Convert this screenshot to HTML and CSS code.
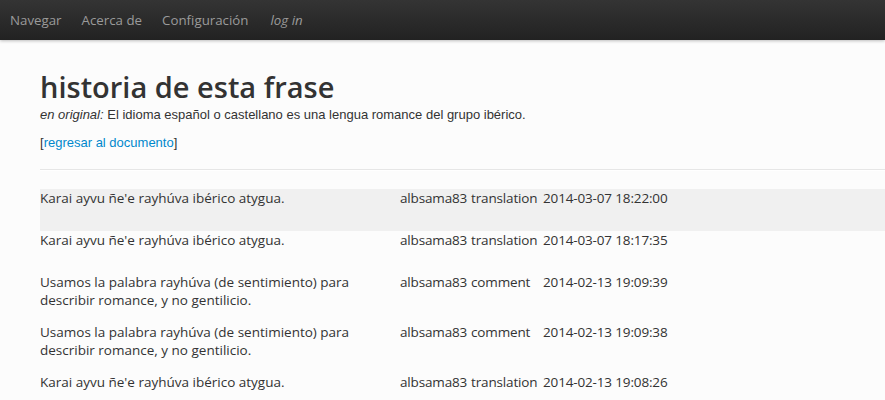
FILE: index.html
```html
<!DOCTYPE html>
<html lang="es">
<head>
<meta charset="utf-8">
<title>historia de esta frase</title>
<link rel="stylesheet" href="styles.css">
</head>
<body>
<nav class="navbar">
  <a class="nav-link" href="#">Navegar</a>
  <a class="nav-link" href="#">Acerca de</a>
  <a class="nav-link" href="#">Configuración</a>
  <a class="nav-link login" href="#">log in</a>
</nav>
<main class="content">
  <h1 class="title">historia de esta frase</h1>
  <p class="original"><em>en original:</em> El idioma español o castellano es una lengua romance del grupo ibérico.</p>
  <p class="back">[<a href="#">regresar al documento</a>]</p>
  <hr class="divider">
  <div class="history">
    <div class="row shaded">
      <div class="text">Karai ayvu ñe'e rayhúva ibérico atygua.</div>
      <div class="user">albsama83</div>
      <div class="kind">translation</div>
      <div class="date">2014-03-07 18:22:00</div>
    </div>
    <div class="row">
      <div class="text">Karai ayvu ñe'e rayhúva ibérico atygua.</div>
      <div class="user">albsama83</div>
      <div class="kind">translation</div>
      <div class="date">2014-03-07 18:17:35</div>
    </div>
    <div class="row">
      <div class="text">Usamos la palabra rayhúva (de sentimiento) para describir romance, y no gentilicio.</div>
      <div class="user">albsama83</div>
      <div class="kind">comment</div>
      <div class="date">2014-02-13 19:09:39</div>
    </div>
    <div class="row">
      <div class="text">Usamos la palabra rayhúva (de sentimiento) para describir romance, y no gentilicio.</div>
      <div class="user">albsama83</div>
      <div class="kind">comment</div>
      <div class="date">2014-02-13 19:09:38</div>
    </div>
    <div class="row">
      <div class="text">Karai ayvu ñe'e rayhúva ibérico atygua.</div>
      <div class="user">albsama83</div>
      <div class="kind">translation</div>
      <div class="date">2014-02-13 19:08:26</div>
    </div>
  </div>
</main>
</body>
</html>
```

FILE: styles.css
```css
html, body {
  margin: 0;
  padding: 0;
}
body {
  background: #fcfcfc;
  color: #333;
  font-family: "Liberation Sans", Arial, sans-serif;
  overflow: hidden;
}
.navbar {
  height: 40px;
  display: flex;
  align-items: center;
  background: linear-gradient(#343434, #222);
  box-shadow: 0 1px 3px rgba(0,0,0,0.25);
}
.nav-link {
  padding: 0 10px;
  font-family: "Open Sans", sans-serif;
  font-size: 13.3px;
  line-height: 20px;
  color: #9a9a9a;
  text-decoration: none;
  margin-top: -1px;
}
.nav-link.login {
  font-style: italic;
  padding-left: 12px;
}
.content {
  padding-left: 40px;
}
.title {
  margin: 29px 0 0;
  font-family: "Open Sans", sans-serif;
  font-weight: 600;
  font-size: 29px;
  line-height: 36px;
  color: #333;
}
.original {
  margin: 1px 0 0;
  font-size: 13px;
  line-height: 18px;
  color: #333;
}
.back {
  margin: 10px 0 0;
  font-size: 13px;
  line-height: 18px;
  color: #333;
}
.back a {
  color: #0088cc;
  text-decoration: none;
}
.divider {
  margin: 17px 0 0;
  border: 0;
  border-top: 1px solid #e6e6e6;
  border-bottom: 1px solid #fff;
  height: 0;
}
.history {
  margin-top: 18px;
}
.row {
  display: grid;
  grid-template-columns: 360px 71px 72px 1fr;
  min-height: 42px;
  box-sizing: border-box;
  padding-bottom: 14px;
  font-family: "Open Sans", sans-serif;
  font-size: 13.5px;
  line-height: 18px;
  color: #333;
}
.row.shaded {
  background: #f0f0f0;
}
.text {
  padding-right: 8px;
}
.user,
.kind,
.date {
  letter-spacing: -0.15px;
}
```
